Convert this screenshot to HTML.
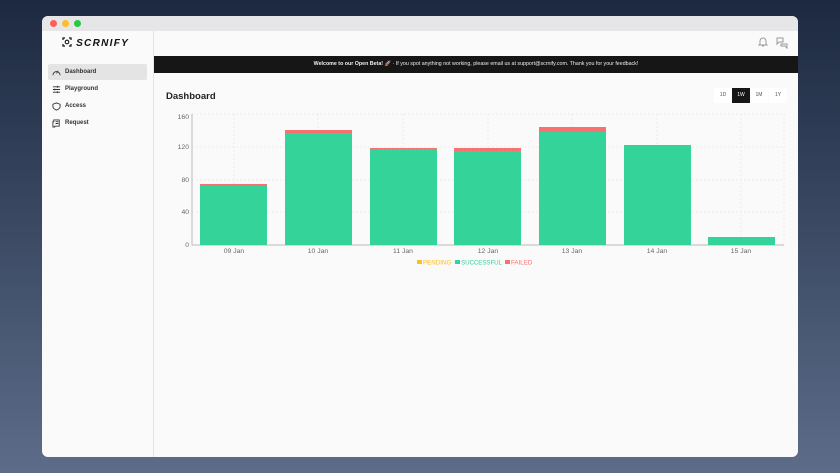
<!DOCTYPE html>
<html><head><meta charset="utf-8"><style>
*{margin:0;padding:0;box-sizing:border-box}
body{width:840px;height:473px;overflow:hidden;background:linear-gradient(#1c2940,#5d6c89);font-family:"Liberation Sans",sans-serif;position:relative}
.win{position:absolute;left:42px;top:16px;width:756px;height:441px;background:#fafafa;border-radius:6px;overflow:hidden}
.tb{height:15px;background:#e6e6e8;position:relative}
.dot{position:absolute;top:4px;width:7px;height:7px;border-radius:50%}
.side{position:absolute;left:0;top:15px;width:112px;bottom:0;border-right:1px solid #e5e5e5}
.logo{position:absolute;left:20px;top:6px;font-weight:bold;font-style:italic;font-size:10px;letter-spacing:1.3px;color:#111;white-space:nowrap}
.nav{position:absolute;left:6px;width:99px;height:16px;font-size:6px;font-weight:bold;color:#333;padding-left:17px;line-height:16px;border-radius:2px}
.nav svg{position:absolute;left:4px;top:3.5px}
.banner{position:absolute;left:112px;top:40px;right:0;height:17px;background:#161616;color:#eee;font-size:5.3px;text-align:center;line-height:17px}
.h{position:absolute;left:124px;top:75px;font-size:9.5px;font-weight:bold;color:#222}
.seg{position:absolute;top:72px;height:15px;width:18px;font-size:5px;text-align:center;line-height:15px;color:#555;background:#fff}
</style></head><body>
<div class="win">
<div class="tb"><div class="dot" style="left:8px;background:#fe5f57"></div><div class="dot" style="left:20px;background:#febc2e"></div><div class="dot" style="left:32px;background:#28c840"></div></div>
<div class="side">
<div class="logo"><svg width="10" height="10" viewBox="0 0 10 10" style="vertical-align:-1px"><path d="M1 3V1H3M7 1H9V3M9 7V9H7M3 9H1V7" stroke="#111" fill="none" stroke-width="1.2"/><circle cx="5" cy="5" r="1.8" stroke="#111" fill="none" stroke-width="1.1"/></svg> SCRNIFY</div>
<div class="nav" style="top:33px;background:#e4e4e4"><svg width="9" height="9" viewBox="0 0 10 10"><path d="M1 8A4 4 0 1 1 9 8M5 6L7 3" stroke="#333" fill="none" stroke-width="1"/></svg>Dashboard</div>
<div class="nav" style="top:50px"><svg width="9" height="9" viewBox="0 0 10 10"><path d="M1 2H9M1 5H9M1 8H9M6 1V3M3 4V6M6 7V9" stroke="#333" fill="none"/></svg>Playground</div>
<div class="nav" style="top:67px"><svg width="9" height="9" viewBox="0 0 10 10"><path d="M5 1L9 2.5V5C9 7.5 5 9 5 9S1 7.5 1 5V2.5Z" stroke="#333" fill="none"/></svg>Access</div>
<div class="nav" style="top:84px"><svg width="9" height="9" viewBox="0 0 10 10"><path d="M2 1H8V8H3V9H1V3H2ZM4 3H7M4 5H7" stroke="#333" fill="none"/></svg>Request</div>
</div>
<svg style="position:absolute;left:715px;top:20px" width="12" height="12" viewBox="0 0 12 12"><path d="M3 8V5A3 3 0 0 1 9 5V8L10 9H2ZM5 10H7" stroke="#999" fill="none"/></svg>
<svg style="position:absolute;left:734px;top:21px" width="12" height="12" viewBox="0 0 12 12"><path d="M1 1H7V5H3L1 7ZM5 7H11V11L9 9H5Z" stroke="#999" fill="none"/></svg>
<div class="banner"><b>Welcome to our Open Beta! 🚀</b> · If you spot anything not working, please email us at support@scrnify.com. Thank you for your feedback!</div>
<div class="h">Dashboard</div>
<div class="seg" style="left:672px">1D</div>
<div class="seg" style="left:690px;background:#161616;color:#fff">1W</div>
<div class="seg" style="left:708px">1M</div>
<div class="seg" style="left:727px">1Y</div>
</div>
<svg style="position:absolute;left:0;top:0" width="840" height="473" font-family="Liberation Sans" font-size="6.8" fill="#666">
<g stroke="#ececec" stroke-dasharray="2,2"><path d="M192 114H784M192 147H784M192 180H784M192 212H784"/><path d="M234 114V245M318 114V245M403 114V245M488 114V245M572 114V245M657 114V245M741 114V245M784 114V245"/></g>
<path d="M192 114V245H784" stroke="#bbb" fill="none"/>
<g text-anchor="end"><text x="189" y="119">160</text><text x="189" y="149">120</text><text x="189" y="182">80</text><text x="189" y="214">40</text><text x="189" y="247">0</text></g>
<g fill="#34d399"><rect x="200" y="186" width="67" height="59"/><rect x="285" y="133" width="67" height="112"/><rect x="370" y="149" width="67" height="96"/><rect x="454" y="151" width="67" height="94"/><rect x="539" y="132" width="67" height="113"/><rect x="624" y="145" width="67" height="100"/><rect x="708" y="237" width="67" height="8"/></g>
<g fill="#f87171"><rect x="200" y="184" width="67" height="2"/><rect x="285" y="130" width="67" height="3"/><rect x="370" y="148" width="67" height="1"/><rect x="454" y="148" width="67" height="3"/><rect x="539" y="127" width="67" height="5"/></g>
<g text-anchor="middle"><text x="234" y="253">09 Jan</text><text x="318" y="253">10 Jan</text><text x="403" y="253">11 Jan</text><text x="488" y="253">12 Jan</text><text x="572" y="253">13 Jan</text><text x="657" y="253">14 Jan</text><text x="741" y="253">15 Jan</text></g>
<g font-size="6.2">
<rect x="417" y="260" width="5" height="4" fill="#fbbf24"/><text x="423" y="264.5" fill="#fbbf24">PENDING</text>
<rect x="455" y="260" width="5" height="4" fill="#34d399"/><text x="461" y="264.5" fill="#34d399" textLength="41">SUCCESSFUL</text>
<rect x="505" y="260" width="5" height="4" fill="#f87171"/><text x="511" y="264.5" fill="#f87171">FAILED</text>
</g>
</svg>
</body></html>
